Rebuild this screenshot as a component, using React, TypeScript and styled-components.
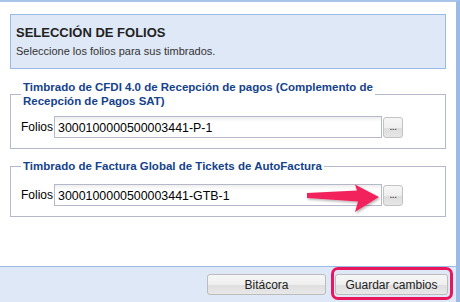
import styled, { createGlobalStyle } from 'styled-components';

const GlobalStyle = createGlobalStyle`
  html, body {
    margin: 0;
    padding: 0;
    background: #fff;
  }
  body {
    font-family: "Liberation Sans", Arial, sans-serif;
    color: #222;
  }
`;

const Window = styled.div`
  position: relative;
  width: 460px;
  height: 302px;
  box-sizing: border-box;
  border-top: 2px solid #a9c4ea;
  border-right: 4px solid #99bbe8;
  display: flex;
  flex-direction: column;
  overflow: hidden;
`;

const Body = styled.div`
  flex: 1;
  padding: 12px 10px 0 10px;
  display: flex;
  flex-direction: column;
`;

const Header = styled.div`
  height: 55px;
  box-sizing: border-box;
  border: 1px solid #99bbe8;
  background: #dfe8f6;
  padding: 10px 5px 0 5px;
`;

const Title = styled.div`
  font-size: 13px;
  font-weight: bold;
  color: #222;
  line-height: 15px;
`;

const Subtitle = styled.div`
  margin-top: 4px;
  font-size: 11px;
  color: #333;
  line-height: 14px;
`;

const Group = styled.fieldset<{ $first?: boolean }>`
  margin: ${(p) => (p.$first ? '11px' : '10px')} 0 0 0;
  padding: 0 10px 10px 10px;
  border: 1px solid #b5b8c8;
  min-width: 0;
`;

const Legend = styled.legend`
  padding: 0 2px;
  font-size: 11.5px;
  font-weight: bold;
  color: #15428b;
  line-height: 14px;
`;

const Row = styled.div<{ $top: number }>`
  display: flex;
  align-items: center;
  margin-top: ${(p) => p.$top}px;
`;

const Label = styled.label`
  width: 33px;
  font-size: 12px;
  color: #000;
`;

const Input = styled.input`
  width: 328px;
  height: 22px;
  box-sizing: border-box;
  border: 1px solid #b5b8c8;
  padding: 1px 3px 0 3px;
  font-family: inherit;
  font-size: 12.4px;
  color: #000;
  background: linear-gradient(#eeeeee, #ffffff 5px);
  outline: none;
`;

const PickBtn = styled.button`
  margin-left: 1px;
  width: 20px;
  height: 21px;
  box-sizing: border-box;
  padding: 0;
  border: 1px solid #c3c3c3;
  border-radius: 3px;
  background: linear-gradient(#f6f6f6 0, #efefef 50%, #dddddd 51%, #e6e6e6 100%);
  font-family: inherit;
  font-size: 10px;
  line-height: 10px;
  color: #222;
  letter-spacing: -0.5px;
`;

const Footer = styled.div`
  position: relative;
  height: 36px;
  box-sizing: border-box;
  border-top: 1px solid #99bbe8;
  background: #dfe8f6;
  display: flex;
  justify-content: flex-end;
  align-items: flex-start;
  gap: 9px;
  padding: 7px 8px 0 0;
`;

const Button = styled.button<{ $w: number }>`
  width: ${(p) => p.$w}px;
  height: 21px;
  box-sizing: border-box;
  border: 1px solid #bcbcbc;
  border-radius: 3px;
  background: linear-gradient(#f7f7f7 0, #efefef 50%, #dedede 51%, #e8e8e8 100%);
  font-family: inherit;
  font-size: 12px;
  color: #222;
  padding: 0;
`;

const Highlight = styled.div`
  position: absolute;
  right: 3px;
  top: 0;
  width: 122px;
  height: 33px;
  box-sizing: border-box;
  border: 3px solid #e8175d;
  border-radius: 7px;
  pointer-events: none;
`;

const Arrow = styled.svg`
  position: absolute;
  left: 300px;
  top: 176px;
  width: 90px;
  height: 40px;
  overflow: visible;
  pointer-events: none;
`;

export default function App() {
  return (
    <>
      <GlobalStyle />
      <Window>
        <Body>
          <Header>
            <Title>SELECCIÓN DE FOLIOS</Title>
            <Subtitle>Seleccione los folios para sus timbrados.</Subtitle>
          </Header>

          <Group $first>
            <Legend>
              Timbrado de CFDI 4.0 de Recepción de pagos (Complemento de
              <br />
              Recepción de Pagos SAT)
            </Legend>
            <Row $top={8}>
              <Label>Folios</Label>
              <Input defaultValue="3000100000500003441-P-1" />
              <PickBtn>...</PickBtn>
            </Row>
          </Group>

          <Group>
            <Legend>Timbrado de Factura Global de Tickets de AutoFactura</Legend>
            <Row $top={11}>
              <Label>Folios</Label>
              <Input defaultValue="3000100000500003441-GTB-1" />
              <PickBtn>...</PickBtn>
            </Row>
          </Group>
        </Body>

        <Footer>
          <Button $w={119}>Bitácora</Button>
          <Button $w={113}>Guardar cambios</Button>
          <Highlight />
        </Footer>

        <Arrow viewBox="300 176 90 40">
          <defs>
            <filter id="sh" x="-20%" y="-40%" width="140%" height="180%">
              <feDropShadow dx="1" dy="1.5" stdDeviation="1.2" floodColor="#000" floodOpacity="0.3" />
            </filter>
          </defs>
          <polygon
            points="307,191 357,188.5 355,182.5 379,195 355,210 358,199.5 307,196"
            fill="#f2245c"
            filter="url(#sh)"
          />
        </Arrow>
      </Window>
    </>
  );
}
